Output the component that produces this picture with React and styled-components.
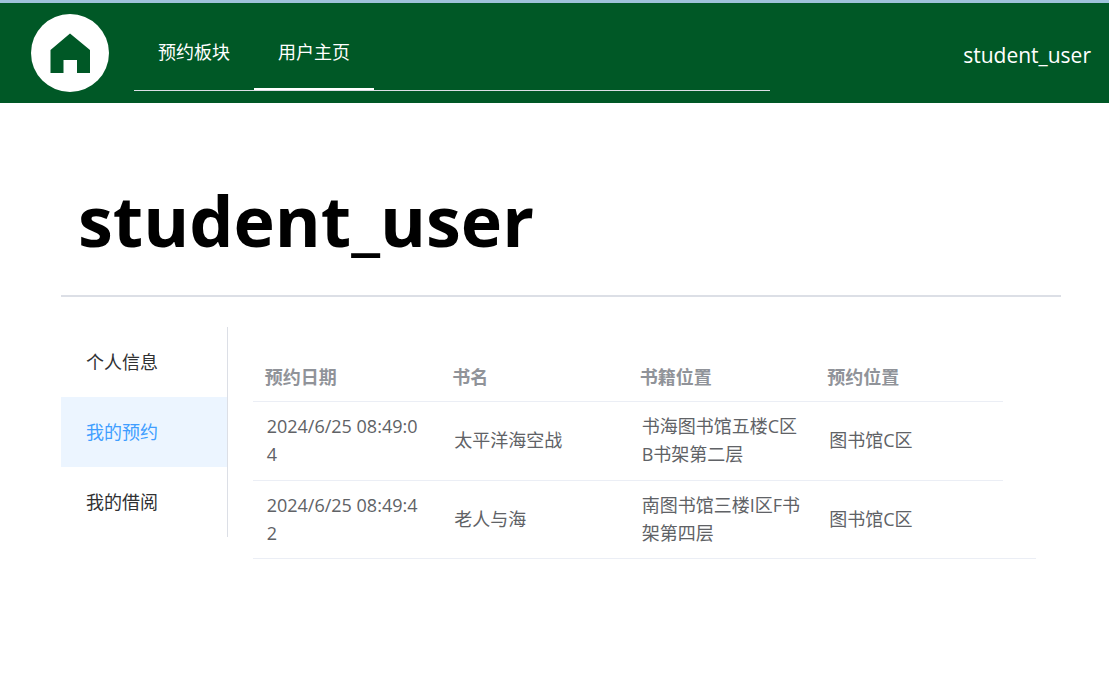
import React from "react";
import styled, { createGlobalStyle } from "styled-components";

const GlobalStyle = createGlobalStyle`
  *, *::before, *::after { box-sizing: border-box; }
  body {
    margin: 0;
    background: #fff;
    font-family: "Open Sans", "Noto Sans CJK SC", sans-serif;
    font-size: 18px;
    line-height: 28px;
    color: #303133;
  }
`;

const Header = styled.header`
  display: flex;
  align-items: center;
  height: 103px;
  padding: 0 18px 0 31px;
  border-top: 3px solid #9fc3db;
  background: #005826;
`;

const HomeLink = styled.a`
  display: block;
  flex: none;
  width: 78px;
  height: 78px;
  margin-right: 25px;
`;

const TopNav = styled.nav`
  display: flex;
  flex: 0 1 636px;
  height: 76px;
  border-bottom: 1px solid #dcdfe6;
`;

const TopNavLink = styled.a`
  display: flex;
  align-items: center;
  justify-content: center;
  width: 120px;
  border-bottom: 2px solid ${({ $active }) => ($active ? "#fff" : "transparent")};
  color: #fff;
  text-decoration: none;
  white-space: nowrap;
`;

const UserName = styled.span`
  margin-left: auto;
  padding-top: 3px;
  font-size: 21px;
  color: #fff;
`;

const Page = styled.main`
  padding: 70px 48px 40px 61px;
`;

const Title = styled.h1`
  margin: 0;
  padding: 0 0 28px 17px;
  border-bottom: 2px solid #dcdfe6;
  font-size: 70px;
  line-height: 94px;
  font-weight: 700;
  color: #000;
`;

const Columns = styled.div`
  display: grid;
  grid-template-columns: 1fr 5fr;
  align-items: start;
  margin-top: 30px;
`;

const SideNav = styled.nav`
  display: flex;
  flex-direction: column;
  border-right: 1px solid #dcdfe6;
`;

const SideNavLink = styled.a`
  padding: 0 25px;
  line-height: 70px;
  color: ${({ $active }) => ($active ? "#409eff" : "#303133")};
  background: ${({ $active }) => ($active ? "#ecf5ff" : "transparent")};
  text-decoration: none;
  white-space: nowrap;
`;

const TablePanel = styled.section`
  margin: 25px 25px 0;
  border-bottom: 1px solid #ebeef5;
`;

const Table = styled.table`
  width: 100%;
  max-width: 750px;
  table-layout: fixed;
  border-collapse: separate;
  border-spacing: 0;
`;

const HeadCell = styled.th`
  padding: 11px 12px 10px;
  border-bottom: 1px solid #ebeef5;
  text-align: left;
  font-weight: 700;
  color: #909399;
`;

const Cell = styled.td`
  padding: 10px 13px 12px 14px;
  border-bottom: 1px solid #ebeef5;
  color: #606266;
  word-break: break-all;

  tr:last-child > & {
    padding-bottom: 11px;
    border-bottom: 0;
  }
`;

const columns = ["预约日期", "书名", "书籍位置", "预约位置"];

const reservations = [
  ["2024/6/25 08:49:04", "太平洋海空战", "书海图书馆五楼C区B书架第二层", "图书馆C区"],
  ["2024/6/25 08:49:42", "老人与海", "南图书馆三楼I区F书架第四层", "图书馆C区"],
];

const topLinks = ["预约板块", "用户主页"];
const sideLinks = ["个人信息", "我的预约", "我的借阅"];

function HomeLogo() {
  return (
    <svg width="78" height="78" viewBox="0 0 78 78" aria-hidden="true">
      <circle cx="39" cy="39" r="39" fill="#fff" />
      <path d="M39 19.500 59 36v23H46V46H32.500v13H19.500V36z" fill="#005826" />
    </svg>
  );
}

export default function App() {
  return (
    <>
      <GlobalStyle />
      <Header>
        <HomeLink href="#" aria-label="首页">
          <HomeLogo />
        </HomeLink>
        <TopNav>
          {topLinks.map((label) => (
            <TopNavLink key={label} href="#" $active={label === "用户主页"}>
              {label}
            </TopNavLink>
          ))}
        </TopNav>
        <UserName>student_user</UserName>
      </Header>
      <Page>
        <Title>student_user</Title>
        <Columns>
          <SideNav>
            {sideLinks.map((label) => (
              <SideNavLink key={label} href="#" $active={label === "我的预约"}>
                {label}
              </SideNavLink>
            ))}
          </SideNav>
          <TablePanel>
            <Table>
              <thead>
                <tr>
                  {columns.map((name) => (
                    <HeadCell key={name} scope="col">{name}</HeadCell>
                  ))}
                </tr>
              </thead>
              <tbody>
                {reservations.map((row) => (
                  <tr key={row[0]}>
                    {row.map((value, i) => (
                      <Cell key={columns[i]}>{value}</Cell>
                    ))}
                  </tr>
                ))}
              </tbody>
            </Table>
          </TablePanel>
        </Columns>
      </Page>
    </>
  );
}
